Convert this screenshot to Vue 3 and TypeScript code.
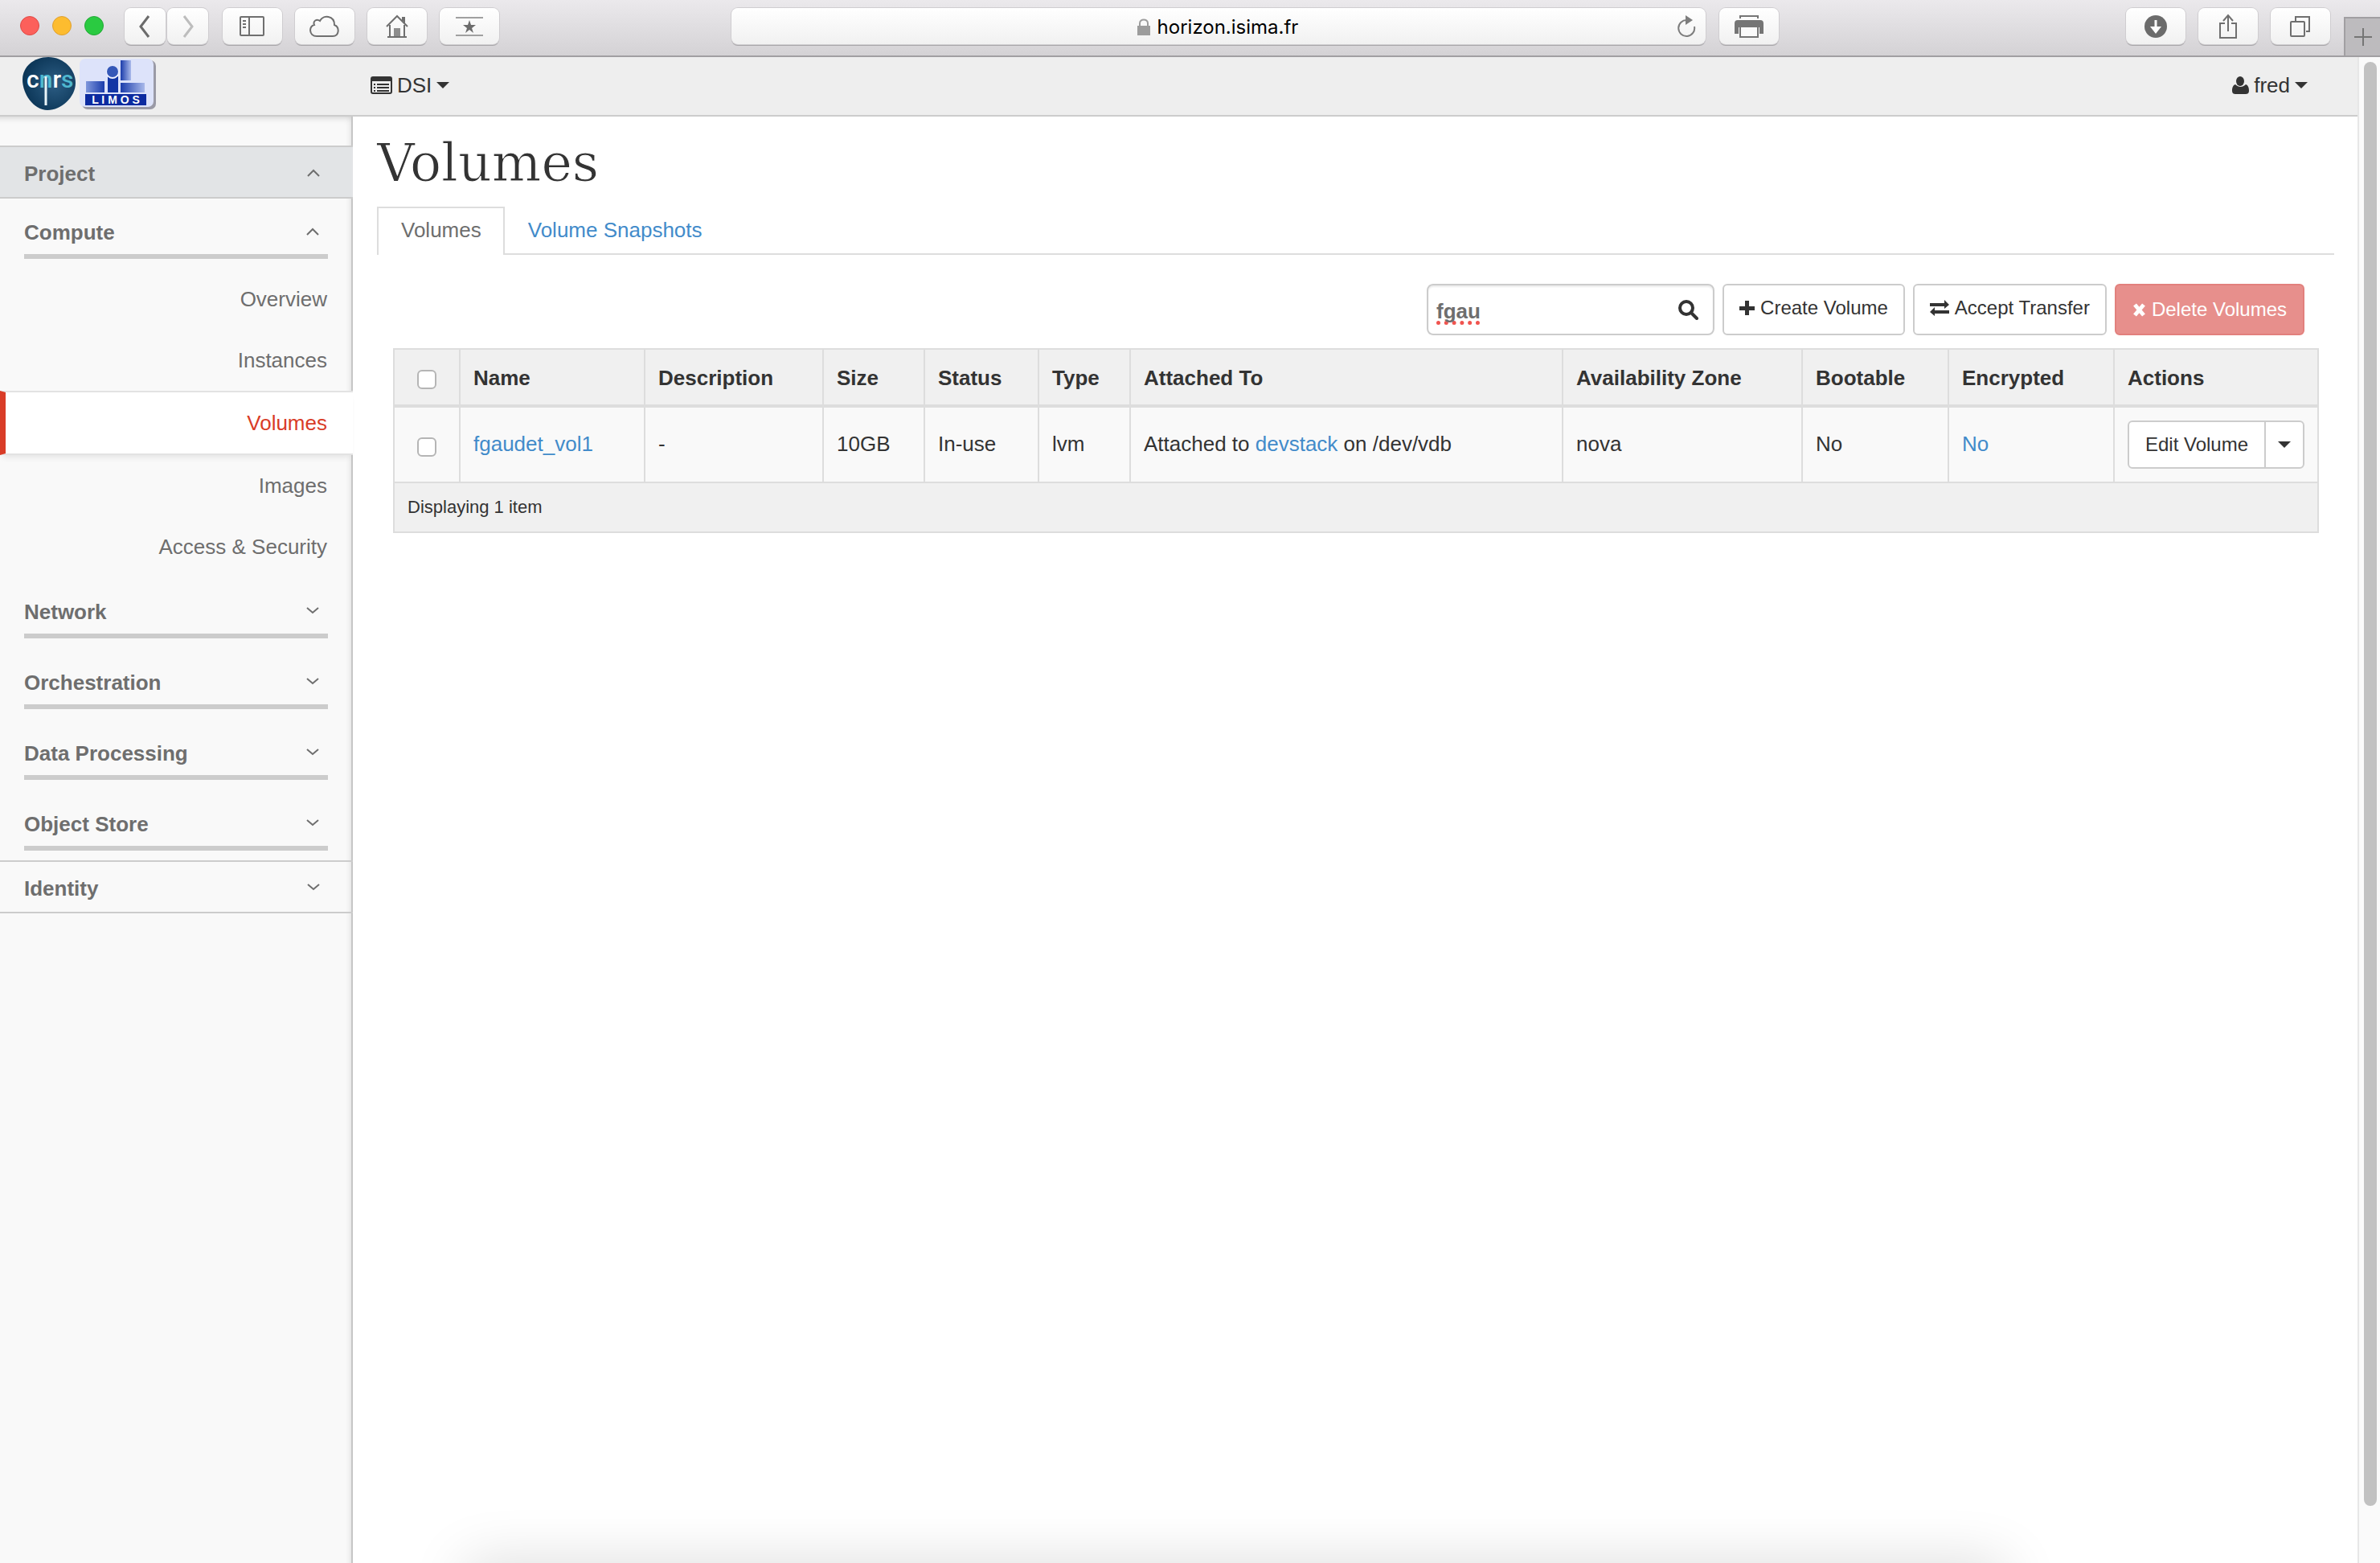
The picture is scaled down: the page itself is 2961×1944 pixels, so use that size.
<script setup lang="ts">
import { ref } from 'vue'

interface PanelItem {
  label: string
  active?: boolean
}
interface PanelGroup {
  label: string
  open?: boolean
  items: PanelItem[]
}

const groups: PanelGroup[] = [
  {
    label: 'Compute',
    open: true,
    items: [
      { label: 'Overview' },
      { label: 'Instances' },
      { label: 'Volumes', active: true },
      { label: 'Images' },
      { label: 'Access & Security' },
    ],
  },
  { label: 'Network', items: [] },
  { label: 'Orchestration', items: [] },
  { label: 'Data Processing', items: [] },
  { label: 'Object Store', items: [] },
]

const columns = [
  { label: 'Name', cls: 'c-name' },
  { label: 'Description', cls: 'c-desc' },
  { label: 'Size', cls: 'c-size' },
  { label: 'Status', cls: 'c-status' },
  { label: 'Type', cls: 'c-type' },
  { label: 'Attached To', cls: 'c-attached' },
  { label: 'Availability Zone', cls: 'c-zone' },
  { label: 'Bootable', cls: 'c-boot' },
  { label: 'Encrypted', cls: 'c-enc' },
  { label: 'Actions', cls: 'c-actions' },
]

const filter = ref('fgau')
</script>

<template>
  <div class="window">
    <header class="chrome">
      <div class="lights">
        <button class="light red" aria-label="Close"></button>
        <button class="light amber" aria-label="Minimise"></button>
        <button class="light green" aria-label="Full screen"></button>
      </div>
      <div class="history">
        <button class="tool half" aria-label="Back">
          <svg width="16" height="30" viewBox="0 0 16 30"><path d="M12 2 2 15l10 13" fill="none" stroke="#6b6b6b" stroke-width="3" /></svg>
        </button>
        <button class="tool half" aria-label="Forward">
          <svg width="16" height="30" viewBox="0 0 16 30"><path d="m3 2 10 13L3 28" fill="none" stroke="#bdbdbd" stroke-width="3" /></svg>
        </button>
      </div>
      <div class="tools">
        <button class="tool" aria-label="Sidebar">
          <svg width="32" height="26" viewBox="0 0 32 26" fill="none" stroke="#6f6f6f" stroke-width="2"><rect x="1" y="1" width="29" height="23" rx="1" /><path d="M12 1v23M4 6h4M4 10h4M4 14h4" /></svg>
        </button>
        <button class="tool" aria-label="iCloud tabs">
          <svg width="38" height="28" viewBox="0 0 38 28" fill="none" stroke="#6f6f6f" stroke-width="2"><path d="M9 26C-1 26-1 13 6 12 4 7 9 4 13 7 17-1 31 0 31 12c7 3 6 14-2 14z" /></svg>
        </button>
        <button class="tool" aria-label="Home">
          <svg width="28" height="30" viewBox="0 0 28 30" fill="none" stroke="#6f6f6f" stroke-width="2"><path d="M1 15 14 2l13 13M5 13v14M23 13v14M2 28h24M21 8V4h2v7" /><path d="M10 17h8v10h-8z" fill="#8d8d8d" stroke="none" /></svg>
        </button>
        <button class="tool" aria-label="Top sites">
          <svg width="34" height="26" viewBox="0 0 34 26"><path d="M0 2h34M0 24h34" stroke="#a0a0a0" stroke-width="2" /><path d="m17 5 2 6h6l-5 4 2 6-5-4-5 4 2-6-5-4h6z" fill="#6b6b6b" /></svg>
        </button>
      </div>
      <div class="address">
        <svg width="16" height="22" viewBox="0 0 16 22"><path d="M0 9h16v12H0z" fill="#9c9c9c" /><path d="M3 10V6c0-6 10-6 10 0v4" fill="none" stroke="#9c9c9c" stroke-width="2" /></svg>
        <span>horizon.isima.fr</span>
        <button class="reload" aria-label="Reload">
          <svg width="24" height="28" viewBox="0 0 24 28"><path d="M13 7A10 10 0 1 0 22 15" fill="none" stroke="#7d7d7d" stroke-width="2" /><path d="m11 1 9 6-9 6z" fill="#7d7d7d" /></svg>
        </button>
      </div>
      <button class="tool" aria-label="Print">
        <svg width="36" height="30" viewBox="0 0 36 30"><path d="M7 5V2h22v3" fill="none" stroke="#757575" stroke-width="2" /><path d="M4 7h28q4 0 4 4v13h-5v-8H5v8H0V11q0-4 4-4z" fill="#757575" /><path d="M7 15h22v13H7z" fill="#fafafa" stroke="#757575" stroke-width="2" /></svg>
      </button>
      <div class="tools right">
        <button class="tool" aria-label="Downloads">
          <svg width="28" height="28" viewBox="0 0 28 28"><circle cx="14" cy="14" r="14" fill="#6b6b6b" /><path d="M14 6v11" stroke="#fff" stroke-width="3" /><path d="M7 14h14l-7 9z" fill="#fff" /></svg>
        </button>
        <button class="tool" aria-label="Share">
          <svg width="24" height="32" viewBox="0 0 24 32" fill="none" stroke="#6f6f6f" stroke-width="2"><path d="M8 12H2v18h20V12h-6M12 22V2M6 9l6-7 6 7" /></svg>
        </button>
        <button class="tool" aria-label="Show tabs">
          <svg width="26" height="26" viewBox="0 0 26 26" fill="none" stroke="#6f6f6f" stroke-width="2"><rect x="1" y="7" width="17" height="18" rx="1" /><path d="M7 6V1h17v18h-4" /></svg>
        </button>
      </div>
      <button class="new-tab" aria-label="New tab">
        <svg width="22" height="22" viewBox="0 0 22 22"><path d="M11 0v22M0 11h22" stroke="#757575" stroke-width="2" /></svg>
      </button>
    </header>

    <div class="viewport">
      <div class="page">
        <header class="topbar">
          <a href="#" class="brand" aria-label="Home">
            <svg width="66" height="66" viewBox="0 0 66 66">
              <defs>
                <radialGradient id="blob" cx=".6" cy=".5" r=".6">
                  <stop offset="0" stop-color="#2c5d84" />
                  <stop offset="1" stop-color="#0b3556" />
                </radialGradient>
              </defs>
              <path d="M32 0C52 0 66 16 66 32 66 50 48 66 31 66 14 66 0 46 0 28 0 12 14 0 32 0z" fill="url(#blob)" />
              <text x="5" y="38" class="cnrs"><tspan fill="#fff">c</tspan><tspan fill="#4fb8d0">n</tspan><tspan fill="#fff">r</tspan><tspan fill="#4fb8d0">s</tspan></text>
              <path d="M29 24v36" stroke="#e8f4f8" stroke-width="3" />
            </svg>
            <svg width="96" height="66" viewBox="0 0 96 66">
              <defs>
                <linearGradient id="fadeR"><stop offset="0" stop-color="#1a3cab" /><stop offset="1" stop-color="#a9b9ea" /></linearGradient>
                <linearGradient id="fadeL"><stop offset="0" stop-color="#7f97dc" /><stop offset="1" stop-color="#1a3cab" /></linearGradient>
              </defs>
              <rect x="3" y="4" width="92" height="61" rx="7" fill="#9a9aa6" />
              <rect x="0" y="2" width="92" height="60" rx="7" fill="#dde3fa" />
              <path d="M51 4h13v25H51z" fill="url(#fadeR)" />
              <path d="M8 30h23v14H8z" fill="url(#fadeL)" />
              <path d="M51 32h30v12H51z" fill="url(#fadeR)" />
              <path d="M35 24h13v20H35z" fill="#1336a5" />
              <circle cx="41" cy="19" r="8" fill="#eef1ff" />
              <circle cx="41" cy="18" r="7" fill="#3558b8" />
              <path d="M7 46h76v14H7z" fill="#0c2ba0" />
              <text x="45" y="58" text-anchor="middle" class="limos">L I M O S</text>
            </svg>
          </a>
          <button class="menu">
            <svg width="27" height="22" viewBox="0 0 27 22"><rect x="1" y="1" width="25" height="20" rx="2" fill="none" stroke="#333" stroke-width="2" /><path d="M1 1h25v5H1z" fill="#333" /><path d="M8 10h15M8 14h15M8 18h15M4 10h2M4 14h2M4 18h2" stroke="#333" stroke-width="2" /></svg>
            <span>DSI</span>
            <i class="caret"></i>
          </button>
          <button class="menu user">
            <svg width="21" height="22" viewBox="0 0 21 22" fill="#333"><ellipse cx="10" cy="6" rx="5" ry="6" /><path d="M4 10c4 4 9 4 13 0 3 1 4 4 4 8 0 3-2 4-4 4H4c-2 0-4-1-4-4 0-4 1-7 4-8z" /></svg>
            <span>fred</span>
            <i class="caret"></i>
          </button>
        </header>

        <div class="body">
          <nav class="sidebar">
            <button class="dashboard open">
              <span>Project</span>
              <svg class="chev" viewBox="0 0 16 10"><path d="m1 9 7-7 7 7" /></svg>
            </button>
            <section v-for="g in groups" :key="g.label" class="group">
              <button class="group-head">
                <span>{{ g.label }}</span>
                <svg class="chev" viewBox="0 0 16 10"><path :d="g.open ? 'm1 9 7-7 7 7' : 'm1 1 7 6 7-6'" /></svg>
              </button>
              <ul v-if="g.open">
                <li v-for="it in g.items" :key="it.label" :class="{ active: it.active }">
                  <a href="#">{{ it.label }}</a>
                </li>
              </ul>
            </section>
            <button class="dashboard">
              <span>Identity</span>
              <svg class="chev" viewBox="0 0 16 10"><path d="m1 1 7 6 7-6" /></svg>
            </button>
          </nav>

          <main class="main">
            <h1>Volumes</h1>
            <div class="tabs">
              <a href="#" class="tab current">Volumes</a>
              <a href="#" class="tab">Volume Snapshots</a>
            </div>

            <div class="toolbar">
              <div class="search">
                <input v-model="filter" type="text" aria-label="Filter" />
                <button aria-label="Search">
                  <svg width="25" height="25" viewBox="0 0 25 25" fill="none" stroke="#333"><circle cx="10" cy="10" r="8" stroke-width="4" /><path d="m16 16 7 7" stroke-width="4" stroke-linecap="round" /></svg>
                </button>
              </div>
              <button class="btn">
                <svg width="19" height="20" viewBox="0 0 19 20"><path d="M7 1h5v7h7v5h-7v6H7v-6H0V8h7z" fill="#333" /></svg>
                <span>Create Volume</span>
              </button>
              <button class="btn">
                <svg width="24" height="20" viewBox="0 0 24 20" fill="#333"><path d="M0 4h18V0l6 6-6 5V8H0zM24 13H6V9l-6 6 6 5v-3h18z" /></svg>
                <span>Accept Transfer</span>
              </button>
              <button class="btn danger">
                <svg width="17" height="17" viewBox="0 0 17 17"><path d="m3 2 11 13M14 2 3 15" stroke="#fff" stroke-width="5" /></svg>
                <span>Delete Volumes</span>
              </button>
            </div>

            <table>
              <colgroup>
                <col class="c-check" />
                <col v-for="c in columns" :key="c.label" :class="c.cls" />
              </colgroup>
              <thead>
                <tr>
                  <th class="check"><input type="checkbox" aria-label="Select all" /></th>
                  <th v-for="c in columns" :key="c.label">{{ c.label }}</th>
                </tr>
              </thead>
              <tbody>
                <tr>
                  <td class="check"><input type="checkbox" aria-label="Select fgaudet_vol1" /></td>
                  <td><a href="#">fgaudet_vol1</a></td>
                  <td>-</td>
                  <td>10GB</td>
                  <td>In-use</td>
                  <td>lvm</td>
                  <td>Attached to <a href="#">devstack</a> on /dev/vdb</td>
                  <td>nova</td>
                  <td>No</td>
                  <td><a href="#">No</a></td>
                  <td class="actions">
                    <div class="split">
                      <button class="edit">Edit Volume</button>
                      <button class="more" aria-label="More actions"><i class="caret"></i></button>
                    </div>
                  </td>
                </tr>
              </tbody>
              <tfoot>
                <tr>
                  <td colspan="11">Displaying 1 item</td>
                </tr>
              </tfoot>
            </table>
          </main>
        </div>
      </div>
      <div class="track"><div class="thumb"></div></div>
    </div>
    <div class="glow"></div>
  </div>
</template>

<style>
body {
  margin: 0;
  background: #fff;
}
</style>

<style scoped>
* {
  box-sizing: border-box;
}
.window {
  position: relative;
  display: flex;
  flex-direction: column;
  min-height: 100vh;
  overflow: hidden;
  font: 26px/36px 'Liberation Sans', Arial, sans-serif;
  color: #333;
}
button {
  font: inherit;
  color: inherit;
  background: none;
  border: 0;
  padding: 0;
}
a {
  color: #428bca;
  text-decoration: none;
}
svg {
  display: block;
  flex: none;
}

/* browser toolbar */
.chrome {
  display: flex;
  align-items: flex-start;
  height: 71px;
  padding: 10px 0 0 25px;
  background: linear-gradient(#ebe9ec, #d4d2d5);
  border-bottom: 2px solid #a19fa2;
}
.lights {
  display: flex;
  gap: 16px;
  padding: 10px 26px 0 0;
}
.light {
  width: 24px;
  height: 24px;
  border-radius: 50%;
}
.red {
  background: #fc605b;
  border: 1px solid #df4a46;
}
.amber {
  background: #fdbc2f;
  border: 1px solid #dea032;
}
.green {
  background: #2aca41;
  border: 1px solid #22a936;
}
.history {
  display: flex;
  gap: 2px;
  margin-right: 18px;
}
.tools {
  display: flex;
  gap: 16px;
}
.tool {
  display: flex;
  flex: none;
  align-items: center;
  justify-content: center;
  width: 74px;
  height: 45px;
  border-radius: 8px;
  background: linear-gradient(#fff, #f1f1f1);
  box-shadow: 0 0 0 1px #cfcdd0, 0 2px 0 #a9a7aa;
}
.half {
  width: 51px;
}
.address {
  position: relative;
  display: flex;
  flex: 1;
  align-items: center;
  justify-content: center;
  gap: 9px;
  height: 45px;
  margin: 0 17px 0 289px;
  padding: 2px 2px 0 0;
  border-radius: 8px;
  background: linear-gradient(#fff, #f1f1f1);
  box-shadow: 0 0 0 1px #cfcdd0, 0 2px 0 #a9a7aa;
  font: 24px/36px Inter, Roboto, sans-serif;
  color: #000;
}
.reload {
  position: absolute;
  right: 12px;
  top: 8px;
}
.right {
  margin: 0 17px 0 432px;
}
.new-tab {
  display: flex;
  flex: none;
  align-items: center;
  justify-content: center;
  align-self: flex-end;
  width: 45px;
  height: 48px;
  background: #bdbbbe;
  border: solid #a19fa2;
  border-width: 2px 0 0 2px;
}

/* page frame */
.viewport {
  display: flex;
  flex: 1;
}
.page {
  display: flex;
  flex: 1;
  flex-direction: column;
}
.track {
  width: 28px;
  padding: 6px 4px 71px 6px;
  background: #fafafa;
  border-left: 2px solid #e7e7e7;
}
.thumb {
  height: 100%;
  border-radius: 8px;
  background: #c1c1c1;
}
.topbar {
  display: flex;
  align-items: center;
  height: 74px;
  padding: 0 62px 2px 28px;
  background: #eee;
  border-bottom: 2px solid #ccc;
}
.brand {
  display: flex;
  gap: 5px;
  width: 433px;
  padding-bottom: 4px;
}
.cnrs {
  font: 500 30px Roboto, sans-serif;
}
.limos {
  font: bold 14px 'Liberation Sans', sans-serif;
  fill: #fff;
}
.menu {
  display: flex;
  align-items: center;
  gap: 6px;
}
.user {
  margin-left: auto;
}
.caret {
  border: solid transparent;
  border-width: 8px 8px 0;
  border-top-color: #333;
}
.body {
  display: flex;
  flex: 1;
}

/* navigation */
.sidebar {
  flex: none;
  width: 439px;
  padding-top: 36px;
  background: #f9f9f9;
  box-shadow: inset -2px 0 0 #c6c6c6, inset -8px 8px 10px -8px rgba(0, 0, 0, 0.22);
  color: #6e6e6e;
}
.dashboard,
.group-head {
  display: flex;
  align-items: center;
  justify-content: space-between;
  width: 100%;
  font-weight: bold;
}
.dashboard {
  height: 66px;
  padding: 4px 41px 0 30px;
  border: solid #ccc;
  border-width: 2px 0;
}
.dashboard.open {
  background: #e2e4e6;
}
.chev {
  width: 16px;
  height: 10px;
  margin-bottom: 3px;
  fill: none;
  stroke: #6e6e6e;
  stroke-width: 2;
}
.group {
  padding: 25px 0 12px;
}
.group:has(ul) {
  padding: 24px 0 0;
}
.group-head {
  width: 378px;
  margin-left: 30px;
  padding: 0 11px 9px 0;
  border-bottom: 6px solid #ccc;
}
ul {
  margin: 12px 0 0;
  padding: 0;
  list-style: none;
  text-align: right;
}
li a {
  display: block;
  padding: 20px 32px 20px 0;
  color: #6e6e6e;
}
li.active a {
  background: #fff;
  border: solid #e3e3e3;
  border-width: 2px 0;
  border-left: 7px solid #d93c27;
  box-shadow: 0 6px 8px -4px rgba(0, 0, 0, 0.1);
  color: #d93c27;
}

/* content */
.main {
  flex: 1;
  padding: 22px 29px 0 30px;
}
h1 {
  margin: 0;
  font: 65px/72px 'DejaVu Serif', serif;
  -webkit-text-stroke: 1px #fff;
}
.tabs {
  display: flex;
  margin-top: 18px;
  border-bottom: 2px solid #ddd;
}
.tab {
  height: 58px;
  padding: 11px 29px;
}
.tab.current {
  height: 60px;
  margin-bottom: -2px;
  padding: 9px 27px 9px 28px;
  background: #fff;
  border: 2px solid #ddd;
  border-bottom: 0;
  color: #6e6e6e;
}
.toolbar {
  display: flex;
  justify-content: flex-end;
  gap: 10px;
  padding: 36px 37px 16px 0;
}
.search {
  display: flex;
  align-items: center;
  justify-content: space-between;
  width: 358px;
  height: 64px;
  padding: 0 18px 0 10px;
  border: 2px solid #ccc;
  border-radius: 8px;
  box-shadow: inset 0 2px 2px rgba(0, 0, 0, 0.08);
}
.search input {
  width: 280px;
  padding: 4px 0 0;
  border: 0;
  outline: 0;
  background: none;
  font: bold 26px/36px 'Liberation Sans', Arial, sans-serif;
  color: #6e6e6e;
  text-decoration: underline dotted #f0544f 5px;
  text-decoration-skip-ink: none;
  text-underline-offset: 3px;
}
.btn {
  display: flex;
  align-items: center;
  gap: 7px;
  height: 64px;
  padding: 0 19px 4px;
  border: 2px solid #ccc;
  border-radius: 6px;
  background: #fff;
  font-size: 24px;
}
.danger {
  padding: 0 20px;
  background: #e78f8c;
  border-color: #e2807d;
  color: #fff;
}
table {
  width: calc(100% - 39px);
  margin-left: 20px;
  table-layout: fixed;
  border-collapse: collapse;
  background: #f9f9f9;
}
.c-check {
  width: 82px;
}
.c-name {
  width: 230px;
}
.c-desc {
  width: 222px;
}
.c-size {
  width: 126px;
}
.c-status {
  width: 142px;
}
.c-type {
  width: 114px;
}
.c-zone {
  width: 298px;
}
.c-boot {
  width: 182px;
}
.c-enc {
  width: 206px;
}
.c-actions {
  width: 254px;
}
th,
td {
  padding: 0 16px;
  border: 2px solid #ddd;
  text-align: left;
  white-space: nowrap;
}
th {
  height: 71px;
  padding-top: 2px;
  background: #f0f0f0;
  border-bottom-width: 4px;
}
tbody td {
  height: 95px;
  padding-bottom: 2px;
}
tbody .actions {
  padding-bottom: 0;
}
tfoot td {
  height: 62px;
  background: #f0f0f0;
  font-size: 22px;
}
.check {
  padding: 0;
  text-align: center;
}
.check input {
  appearance: none;
  display: block;
  width: 24px;
  height: 24px;
  margin: 6px auto 0;
  border: 2px solid #b5b5b5;
  border-radius: 6px;
  background: #fff;
}
.split {
  display: flex;
  width: 220px;
  height: 60px;
  border: 2px solid #ccc;
  border-radius: 6px;
  background: #fff;
  font-size: 24px;
}
.edit {
  flex: 1;
}
.more {
  display: flex;
  align-items: center;
  justify-content: center;
  width: 48px;
  border-left: 2px solid #ccc;
}

/* soft shadow rising from below the window */
.glow {
  position: absolute;
  top: 100%;
  left: 580px;
  right: 467px;
  height: 60px;
  box-shadow: 0 0 70px rgba(0, 0, 0, 0.15);
}
</style>
